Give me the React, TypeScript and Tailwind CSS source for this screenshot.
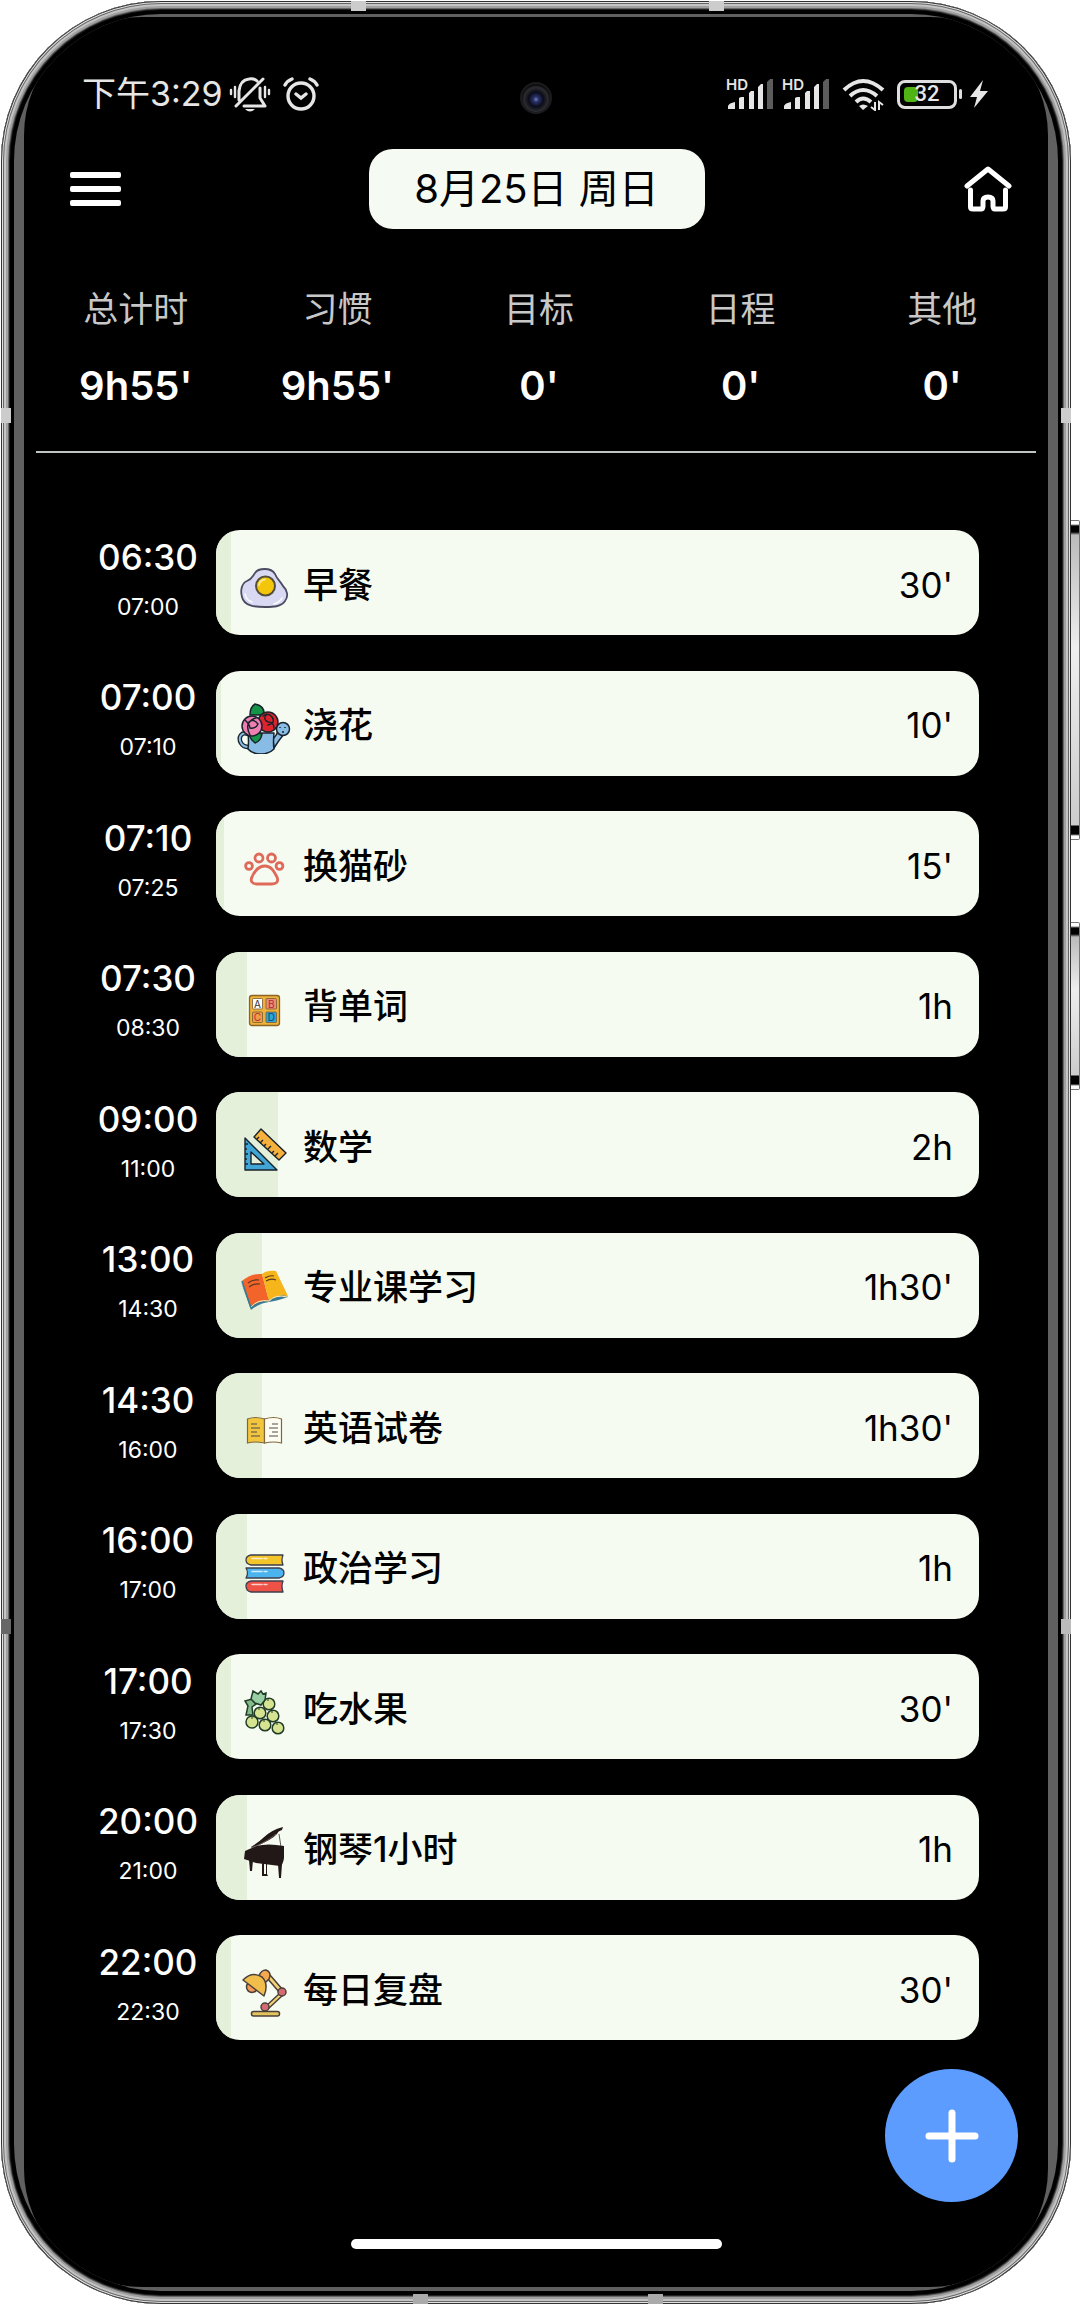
import type { ReactNode } from "react";

type Task = {
  start: string;
  end: string;
  title: string;
  duration: string;
  minutes: number;
  icon: ReactNode;
};

const EggIcon = () => (
  <svg viewBox="0 0 56 56" className="size-14 shrink-0" aria-hidden="true">
    <path
      d="M18 16C21 11 34 10 38 17C40 22 43 24 46 29C50 33 52 39 48 44C44 50 36 50 28 50C18 50 7 49 5 40C3 33 5 26 10 24C15 22 15 20 18 16Z"
      fill="#d9d9f3"
      stroke="#4b4c62"
      strokeWidth="1.8"
    />
    <path d="M8 37q1 6 7 8M45 41q-2 4-8 6" fill="none" stroke="#fff" strokeWidth="1.5" strokeLinecap="round" />
    <circle cx="28.500" cy="29" r="9.500" fill="#f3c60b" stroke="#55503a" strokeWidth="2" />
    <path d="M22 28q1-5 6-5.500" fill="none" stroke="#fbe88c" strokeWidth="1.8" strokeLinecap="round" />
  </svg>
);

const FlowerIcon = () => (
  <svg viewBox="0 0 56 56" className="size-14 shrink-0" aria-hidden="true">
    <g stroke="#17232c" strokeWidth="1.5" strokeLinejoin="round" strokeLinecap="round">
      <path d="M11 36C4 33 1 40 4 45C6 49 9 49 12 49" fill="none" stroke="#17232c" strokeWidth="4.500" />
      <path d="M11 36C4 33 1 40 4 45C6 49 9 49 12 49" fill="none" stroke="#89bce4" strokeWidth="2" />
      <path d="M36 41Q40 37 41 33L47 36Q42 42 37 50Z" fill="#89bce4" />
      <circle cx="46" cy="31" r="6.500" fill="#89bce4" />
      <path d="M11 35H37Q36 46 37 51Q32 56 24 56Q15 56 11 51Q12 44 11 35Z" fill="#89bce4" />
      <path d="M13 17Q13 9 18 6Q28 8 27 17Z" fill="#159447" />
      <circle cx="31" cy="24" r="10" fill="#dd242c" />
      <path d="M26 18q5-4 9 1q4 6-4 8M30 16q-5 5 1 8q6 0 6 6" fill="none" />
      <path d="M12 37Q16 33 25 36Q24 43 18 45Q14 42 12 37Z" fill="#159447" />
      <circle cx="15" cy="28" r="10" fill="#ef7fb0" />
      <path d="M8 22q5 5 5 8q6 1 8-4q-5-6-9-2q-3 6 1 13M19 20q-5 1-7 5" fill="none" />
    </g>
    <path d="M43 29v1M48 29v1M45 34h2" stroke="#17232c" strokeWidth="1.5" />
  </svg>
);

const PawIcon = () => (
  <svg viewBox="0 0 56 56" className="size-14 shrink-0" aria-hidden="true">
    <g fill="none" stroke="#df6a5a" strokeWidth="2.800">
      <circle cx="22" cy="20" r="4" />
      <circle cx="34.500" cy="20" r="4" />
      <circle cx="12" cy="28" r="3.400" />
      <circle cx="42.500" cy="28" r="3.400" />
      <path d="M28 28C34 28 37 33 40 39C42 44 39 46 35 46H20C15 46 13 43 15 39C18 32 22 28 28 28Z" />
    </g>
  </svg>
);

const AlphabetIcon = () => (
  <svg viewBox="0 0 56 56" className="size-14 shrink-0" aria-hidden="true">
    <rect x="12.500" y="16.500" width="30" height="30" rx="2.500" fill="#edb23a" stroke="#8b6324" strokeWidth="1.300" />
    <g stroke="#7b5934" strokeWidth=".8">
      <rect x="15.500" y="19.500" width="10" height="10.500" rx="1" fill="#fff" />
      <rect x="29" y="19.500" width="10.500" height="10.500" rx="1" fill="#ee8c76" />
      <rect x="15.500" y="33" width="10" height="10.500" rx="1" fill="#f39a4b" />
      <rect x="29" y="33" width="10.500" height="10.500" rx="1" fill="#2ba6da" />
    </g>
    <g fontSize="10" textAnchor="middle" fontFamily="Inter, sans-serif">
      <text x="20.500" y="28.500" fill="#333">A</text>
      <text x="34.300" y="28.500" fill="#a82b35">B</text>
      <text x="20.500" y="42" fill="#a4372a">C</text>
      <text x="34.300" y="42" fill="#123f76">D</text>
    </g>
  </svg>
);

const RulerIcon = () => (
  <svg viewBox="0 0 56 56" className="size-14 shrink-0" aria-hidden="true">
    <g stroke="#18222b" strokeWidth="1.400" strokeLinejoin="round">
      <path d="M8 19V51H40ZM14 33V45H27Z" fill="#41a5d5" fillRule="evenodd" />
      <path d="M24 10L49 34L42 41L17 18Z" fill="#f6b13c" />
      <path d="M8 25h3M8 30h2M8 35h3M8 40h2M8 45h3M20 20l2-2M23 24l3-3M27 27l2-2M31 30l3-3M35 34l2-2M38 37l3-3" fill="none" />
    </g>
  </svg>
);

const OpenBookIcon = () => (
  <svg viewBox="0 0 56 56" className="size-14 shrink-0" aria-hidden="true">
    <path d="M4 22L14 50Q23 43 32 42Q40 41 51 37L47 34L14 44Z" fill="#397994" />
    <path d="M5 21Q14 13 25 14L32 41Q21 40 14 47Z" fill="#f2642a" />
    <path d="M25 14Q30 10 39 11L51 36Q39 34 32 41Z" fill="#f7b51c" />
    <path d="M14 47Q21 39 32 41Q39 34 50 37" fill="none" stroke="#fff0bd" strokeWidth="1" />
    <path d="M5 21L14 48" fill="none" stroke="#397994" strokeWidth="1.500" />
    <path d="M11 23q5-4 11-3M12 27q5-4 11-3M28 18q5-3 9-2M29 21q5-3 10-1" fill="none" stroke="#5b3a22" strokeWidth="1.200" />
  </svg>
);

const ReaderIcon = () => (
  <svg viewBox="0 0 56 56" className="size-14 shrink-0" aria-hidden="true">
    <g stroke="#7e673d" strokeWidth="1.200">
      <path d="M10.500 19Q18 16 27.500 19V43Q18 41 10.500 43Z" fill="#f2c53e" />
      <path d="M27.500 19Q37 16 44.500 19V43Q37 41 27.500 43Z" fill="#fffdf2" />
    </g>
    <path d="M14 24h6M14 28h9M14 32h6M14 36h9M35 24h6M32 28h9M35 32h6M32 36h9" stroke="#4d4d4d" strokeWidth="1.100" />
  </svg>
);

const BooksIcon = () => (
  <svg viewBox="0 0 56 56" className="size-14 shrink-0" aria-hidden="true">
    <g stroke="#3d3f4c" strokeWidth="1.300" strokeLinejoin="round">
      <path d="M46 14H14Q9 15 9 19Q9 23 14 24H46Q44 19 46 14Z" fill="#f3c52b" />
      <path d="M9 27H42Q47 28 47 32Q47 36 42 37H9Q12 32 9 27Z" fill="#4bb4ee" />
      <path d="M46 40H14Q9 41 9 45Q9 50 14 51H46Q44 45 46 40Z" fill="#ee5145" />
    </g>
    <path d="M15 17.500h10M27 17.500h3M15 30.500h10M27 30.500h3M15 43.500h10M27 43.500h3" stroke="#fff" strokeWidth="1.500" strokeLinecap="round" opacity=".75" />
  </svg>
);

const GrapeIcon = () => (
  <svg viewBox="0 0 56 56" className="size-14 shrink-0" aria-hidden="true">
    <g stroke="#213d28" strokeWidth="1.500">
      <g fill="#d6e391">
        <circle cx="32" cy="23" r="5.800" />
        <circle cx="23" cy="32" r="5.800" />
        <circle cx="36" cy="35" r="5.800" />
        <circle cx="15" cy="41" r="6" />
        <circle cx="28" cy="44" r="5.800" />
        <circle cx="41" cy="47" r="5.800" />
      </g>
      <path d="M9 34L11 25L8 20L15 18L19 23L15 26L16 34Z" fill="#85ba8b" />
      <path d="M14 18L16 10L21 13L24 10L26 13L29 12L28 19L24 24L18 22Z" fill="#98cfa4" />
    </g>
    <path d="M30 19h2M21 28h2M34 31h2M14 37h2M26 40h2M39 43h2" stroke="#213d28" strokeWidth="1.200" />
  </svg>
);

const PianoIcon = () => (
  <svg viewBox="0 0 56 56" className="size-14 shrink-0" aria-hidden="true">
    <g fill="#211817">
      <path d="M14 25Q22 20 26 16Q34 8 46 5L45 8Q41 9 40 12Q35 18 15 26Z" />
      <path d="M8 29L19 24Q31 21 47 24V36Q46 43 43 44L19 41L7 37Z" />
      <path d="M12 38h4l-1 11h-2ZM41 42h4l-1 14h-2ZM25 41h2v11h2V41h1v11l1 2h-6Z" />
    </g>
    <path d="M42 12L44 25" stroke="#211817" strokeWidth=".7" />
    <path d="M14 26Q30 20 39 12" fill="none" stroke="#8a7772" strokeWidth=".7" />
  </svg>
);

const LampIcon = () => (
  <svg viewBox="0 0 56 56" className="size-14 shrink-0" aria-hidden="true">
    <g stroke="#4a4039" strokeWidth="1.500" strokeLinejoin="round">
      <path d="M30 16L43 31L46 28L33 13ZM43 31L28 45L31 47L46 33Z" fill="#f2d274" />
      <circle cx="15" cy="25" r="5.500" fill="#f39a57" />
      <path d="M22 14Q24 8 29 8Q35 10 32 17L28 21Z" fill="#f5a84d" />
      <path d="M6 18Q15 9 25 15Q32 22 27 34Z" fill="#f2be4b" />
      <circle cx="45" cy="30" r="4" fill="#d56a72" />
      <circle cx="28" cy="45" r="4" fill="#d56a72" />
      <rect x="14.500" y="49.500" width="28" height="4.500" rx="2" fill="#e4c45e" />
    </g>
  </svg>
);

const SignalIcon = () => (
  <svg viewBox="0 -4 48 40" className="h-10 w-12 overflow-visible" fill="#e6e6e6" aria-hidden="true">
    <text x="0" y="12" fontSize="15" fontWeight="600" fontFamily="Inter, sans-serif">HD</text>
    <path d="M2 31v-3q1-3 7-4v7ZM13 31V20l2-1h3v12ZM23 31V15l2-2h3v18ZM32 31V9l3-3h2v25Z" />
    <path d="M41 31V4l3-3h3v30Z" fill="#5c5c5c" />
  </svg>
);

const tasks: Task[] = [
  { start: "06:30", end: "07:00", title: "早餐", duration: "30'", minutes: 30, icon: <EggIcon /> },
  { start: "07:00", end: "07:10", title: "浇花", duration: "10'", minutes: 10, icon: <FlowerIcon /> },
  { start: "07:10", end: "07:25", title: "换猫砂", duration: "15'", minutes: 15, icon: <PawIcon /> },
  { start: "07:30", end: "08:30", title: "背单词", duration: "1h", minutes: 60, icon: <AlphabetIcon /> },
  { start: "09:00", end: "11:00", title: "数学", duration: "2h", minutes: 120, icon: <RulerIcon /> },
  { start: "13:00", end: "14:30", title: "专业课学习", duration: "1h30'", minutes: 90, icon: <OpenBookIcon /> },
  { start: "14:30", end: "16:00", title: "英语试卷", duration: "1h30'", minutes: 90, icon: <ReaderIcon /> },
  { start: "16:00", end: "17:00", title: "政治学习", duration: "1h", minutes: 60, icon: <BooksIcon /> },
  { start: "17:00", end: "17:30", title: "吃水果", duration: "30'", minutes: 30, icon: <GrapeIcon /> },
  { start: "20:00", end: "21:00", title: "钢琴1小时", duration: "1h", minutes: 60, icon: <PianoIcon /> },
  { start: "22:00", end: "22:30", title: "每日复盘", duration: "30'", minutes: 30, icon: <LampIcon /> },
];

const totals = [
  { label: "总计时", value: "9h55'" },
  { label: "习惯", value: "9h55'" },
  { label: "目标", value: "0'" },
  { label: "日程", value: "0'" },
  { label: "其他", value: "0'" },
];

const StatusBar = () => (
  <div className="relative flex h-10 items-center justify-between pl-[58px] pr-[60px] text-[#e6e6e6]">
    <div className="flex items-center">
      <span className="text-[34px] leading-10">下午3:29</span>
      <svg viewBox="0 0 42 36" className="ml-1.5 h-9 w-[42px]" fill="none" stroke="currentColor" strokeWidth="3" strokeLinecap="round" aria-hidden="true">
        <path d="M10 24V15Q11 4 20 3Q25 2 28 5M31 12V22L36 30H15M7 30L34 3" strokeLinejoin="round" />
        <path d="M16 33H26Q21 38 16 33Z" fill="currentColor" stroke="none" />
        <path d="M2 14v4M6 11v10M36 11v10M40 14v4" strokeWidth="2.400" />
      </svg>
      <svg viewBox="0 0 36 34" className="ml-3 h-[34px] w-9" fill="none" stroke="currentColor" strokeWidth="3.400" strokeLinecap="round" aria-hidden="true">
        <circle cx="18" cy="19" r="13" />
        <path d="M13 17L18 21L23 17M2 8Q4 4 9 2M34 8Q32 4 27 2" />
      </svg>
    </div>
    <div className="flex items-center">
      <SignalIcon />
      <span className="ml-2">
        <SignalIcon />
      </span>
      <svg viewBox="0 0 43 33" className="ml-3 h-[33px] w-[43px]" fill="none" stroke="currentColor" strokeWidth="4" aria-hidden="true">
        <path d="M2 12Q21-6 41 12M8 18Q21 6 35 18M14 24Q21 17 29 24" />
        <path d="M17 28Q21 25 26 28L21 32Z" fill="currentColor" stroke="none" />
        <path d="M33 24v8l-4-3M37 32v-8l4 3" strokeWidth="2" />
      </svg>
      <div className="relative ml-3 flex h-[29px] w-[60px] items-center justify-center rounded-lg border-[3px] border-[#dedede]">
        <span className="absolute left-1 top-1 h-[15px] w-[14px] rounded-sm bg-[#4eb313]" />
        <span className="relative font-[Roboto] text-[22px] font-medium leading-6">32</span>
      </div>
      <span className="ml-0.5 h-2.5 w-[3px] rounded-sm bg-[#dedede]" />
      <svg viewBox="0 0 18 28" className="ml-2 h-7 w-[18px]" fill="currentColor" aria-hidden="true">
        <path d="M13 0L0 17H7L4 28L18 11H10Z" />
      </svg>
    </div>
    <span className="absolute left-1/2 top-2 size-8 -translate-x-1/2 rounded-full border-2 border-[#1c1c20] bg-[radial-gradient(circle_at_50%_55%,#7a86b0_0,#2a3470_12%,#0b0c18_35%,#2c2c30_58%,#101012_68%,#050506_80%)]" />
  </div>
);

const SideButton = ({ className }: { className: string }) => (
  <span
    className={`absolute right-0 w-[9px] rounded-r-xs border border-l-0 border-[#777] bg-[linear-gradient(to_bottom,#fff_0,#fff_3px,#000_5px,#000_11px,#bbb_14px,#eee_40%,#ccc_calc(100%_-_14px),#000_calc(100%_-_13px),#000_calc(100%_-_5px),#fff_calc(100%_-_3px))] ${className}`}
  />
);

const TaskRow = ({ task }: { task: Task }) => (
  <li className="flex items-center">
    <div className="flex w-[136px] shrink-0 flex-col items-center pb-[2px] text-white">
      <time className="text-[35px] leading-[50px] font-medium">{task.start}</time>
      <time className="text-[23px] leading-[50px]">{task.end}</time>
    </div>
    <button
      type="button"
      className="relative flex h-[105px] flex-1 items-center overflow-hidden rounded-3xl bg-[#f6fbf2] pl-[21px] pr-[26px] pt-[5px] text-left text-black"
    >
      {/* share of the whole day */}
      <span
        className="absolute inset-y-0 left-0 bg-[#e4f0da]"
        style={{ width: `${(task.minutes / 1440) * 97}%` }}
      />
      <span className="relative flex flex-1 items-center gap-2.5">
        {task.icon}
        <span className="text-[35px] font-medium">{task.title}</span>
      </span>
      <span className="relative text-[35px]">{task.duration}</span>
    </button>
  </li>
);

const App = () => {
  return (
    <main className="relative flex min-h-screen flex-col bg-white py-px pl-px pr-[9px] font-['Inter','Noto_Sans_CJK_SC',sans-serif]">
      <SideButton className="top-[520px] h-[320px]" />
      <SideButton className="top-[922px] h-[168px]" />

      <div className="relative flex flex-1 flex-col overflow-hidden rounded-[160px] bg-black px-[13px] py-[13px] shadow-[inset_0_0_0_1px_#333,inset_0_0_0_2px_#e2e2e2,inset_0_0_0_3px_#666,inset_0_0_0_5px_#c4c4c4,inset_0_0_0_7px_#a0a0a0,inset_0_0_0_8px_#666,inset_0_0_0_9px_#222]">
        {/* antenna bands */}
        <span className="absolute left-[350px] top-0 h-2.5 w-[15px] bg-[#ccc]" />
        <span className="absolute left-[708px] top-0 h-2.5 w-[15px] bg-[#ccc]" />
        <span className="absolute bottom-0 left-[412px] h-2.5 w-[15px] bg-[#aaa]" />
        <span className="absolute bottom-0 left-[647px] h-2.5 w-[15px] bg-[#aaa]" />
        <span className="absolute left-0 top-[407px] h-[15px] w-2.5 bg-[#ccc]" />
        <span className="absolute right-0 top-[407px] h-[15px] w-2.5 bg-[#ccc]" />
        <span className="absolute left-0 top-[1618px] h-[15px] w-2.5 bg-[#666]" />
        <span className="absolute right-0 top-[1618px] h-[15px] w-2.5 bg-[#bbb]" />

        <div className="flex flex-1 flex-col overflow-hidden rounded-[147px] bg-[#606060] px-2.5 pb-1 pt-[3px]">
          <div className="flex flex-1 flex-col rounded-[118px] bg-black pb-[38px] pt-[57px]">
            <StatusBar />

            <header className="mt-[35px] flex items-center justify-between pl-[46px] pr-9">
              <button type="button" aria-label="菜单" className="flex w-[51px] flex-col gap-2">
                <span className="h-1.5 rounded-xs bg-white" />
                <span className="h-1.5 rounded-xs bg-white" />
                <span className="h-1.5 rounded-xs bg-white" />
              </button>
              <button
                type="button"
                className="h-20 w-[336px] rounded-3xl bg-[#f5fbf3] text-[40px] leading-[80px] text-black"
              >
                8月25日 周日
              </button>
              <button type="button" aria-label="首页" className="pl-3">
                <svg viewBox="0 0 48 46" className="h-[46px] w-12" fill="none" stroke="#fff" strokeWidth="5" strokeLinecap="round" strokeLinejoin="round" aria-hidden="true">
                  <path d="M3 20L24 3L45 20" />
                  <path d="M6.500 24V41Q6.500 43 9 43H17Q19 43 19 40V35Q19 31 24 31Q29 31 29 35V40Q29 43 31 43H39Q41.500 43 41.500 41V24" />
                </svg>
              </button>
            </header>

            <dl className="mt-[53px] grid grid-cols-5 pl-[11px] pr-[5px] text-center">
              {totals.map((item) => (
                <div key={item.label} className="flex flex-col gap-[23px]">
                  <dt className="text-[35px] leading-[54px] text-[#c8c8c8]">{item.label}</dt>
                  <dd className="text-[40px] font-semibold leading-[54px] text-white">{item.value}</dd>
                </div>
              ))}
            </dl>
            <hr className="mx-3 mt-[38px] border-t-2 border-[#c0c4c3]" />

            <ul className="mt-[77px] flex flex-1 flex-col justify-between gap-8 pl-14 pr-[69px]">
              {tasks.map((task) => (
                <TaskRow key={task.start} task={task} />
              ))}
            </ul>

            <div className="mt-[29px] flex justify-end pr-[30px]">
              <button
                type="button"
                aria-label="添加"
                className="flex size-[133px] items-center justify-center rounded-full bg-[#5c9cff]"
              >
                <svg viewBox="0 0 54 54" className="size-[54px]" stroke="#fff" strokeWidth="7" strokeLinecap="round" aria-hidden="true">
                  <path d="M27 4V50M4 27H50" />
                </svg>
              </button>
            </div>
            <div className="mx-auto mt-[37px] h-2.5 w-[371px] rounded-full bg-white" />
          </div>
        </div>
      </div>
    </main>
  );
};

export default App;
